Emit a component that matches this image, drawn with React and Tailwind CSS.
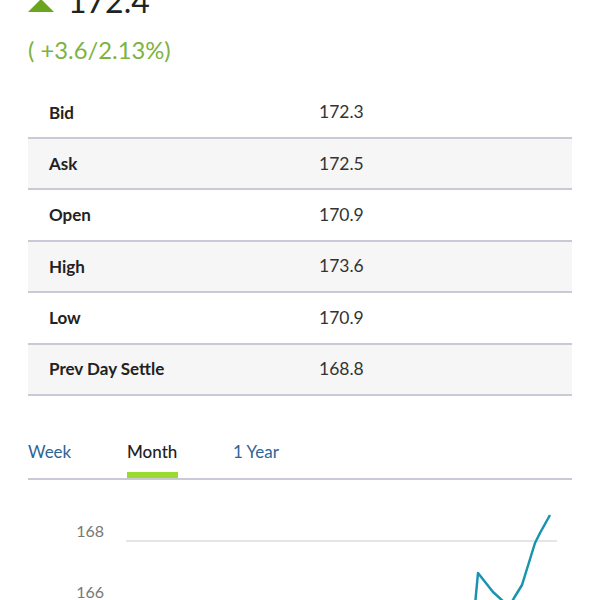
import React from "react";

const rows = [
  ["Bid", "172.3"],
  ["Ask", "172.5"],
  ["Open", "170.9"],
  ["High", "173.6"],
  ["Low", "170.9"],
  ["Prev Day Settle", "168.8"],
];

export default function App() {
  return (
    <div
      className="w-[600px] h-[600px] overflow-hidden bg-white px-[28px]"
      style={{ fontFamily: "Lato, 'Open Sans', sans-serif" }}
    >
      <div className="flex items-start mt-[-15px] h-[32px]">
        <svg width="26" height="13" viewBox="0 0 26 13" className="mt-[14px] shrink-0">
          <polygon points="13,0 26,13 0,13" fill="#6aa51f" />
        </svg>
        <span className="ml-[14px] text-[32px] leading-none text-[#222]">172.4</span>
      </div>
      <div className="mt-[19px] text-[23.8px] leading-[28px] text-[#7cb342]">( +3.6/2.13%)</div>

      <div className="mt-[23.6px]">
        {rows.map(([label, value], i) => (
          <div
            key={label}
            className={`flex items-center h-[51.4px] border-b-2 border-[#c9c9d8] ${
              i % 2 === 1 ? "bg-[#f6f6f6]" : "bg-white"
            }`}
          >
            <div className="w-[291px] pl-[21px] text-[17px] font-bold text-[#222]">{label}</div>
            <div className="text-[17.5px] text-[#333]">{value}</div>
          </div>
        ))}
      </div>

      <div className="mt-[41px] flex items-end border-b-2 border-[#c9c9d8] h-[43px]">
        <div className="w-[99px] h-full text-[17px] text-[#2f6497]">
          <span className="leading-[30px]">Week</span>
        </div>
        <div className="w-[106px] h-full flex flex-col justify-between">
          <span className="text-[17px] leading-[30px] text-[#222] font-medium self-start">Month</span>
          <div className="w-[51px] h-[6px] bg-[#9bdb2f]" />
        </div>
        <div className="h-full text-[17px] text-[#2f6497]">
          <span className="leading-[30px]">1 Year</span>
        </div>
      </div>

      <div className="flex -mx-[28px] h-[120px]">
        <div className="w-[104px] flex flex-col items-end pt-[42px] gap-[43px] text-[16px] leading-[18px] text-[#777]">
          <span>168</span>
          <span>166</span>
        </div>
        <svg width="496" height="120" viewBox="0 0 496 120" className="shrink-0">
          <line x1="22" y1="61" x2="453" y2="61" stroke="#dcdcdc" strokeWidth="1.5" />
          <polyline
            points="371,125 374,93 389,112 400,122 405,127 410,118 418,105 431,63 436,53 446,35"
            fill="none"
            stroke="#1a94ae"
            strokeWidth="2.5"
            strokeLinejoin="round"
          />
        </svg>
      </div>
    </div>
  );
}
